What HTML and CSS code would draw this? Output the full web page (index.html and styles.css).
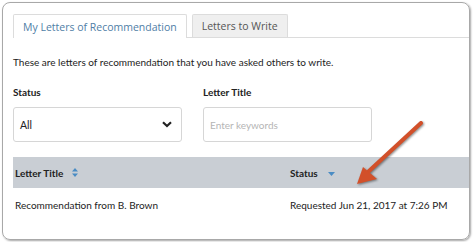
FILE: index.html
```html
<!DOCTYPE html>
<html lang="en">
<head>
    <meta charset="UTF-8">
    <title>Letters of Recommendation</title>
    <link rel="stylesheet" href="styles.css">
</head>
<body>
    <div class="card">
        <!-- Tabs -->
        <div class="tabs">
            <div class="tab active">My Letters of Recommendation</div>
            <div class="tab">Letters to Write</div>
        </div>

        <p class="intro">These are letters of recommendation that you have asked others to write.</p>

        <!-- Filters -->
        <div class="filters">
            <div class="field">
                <label>Status</label>
                <div class="select">
                    <span>All</span>
                    <svg class="chevron" width="10" height="7" viewBox="0 0 10 7">
                        <path d="M1 1.2 L5 5 L9 1.2" fill="none" stroke="#222" stroke-width="2.2"/>
                    </svg>
                </div>
            </div>
            <div class="field">
                <label>Letter Title</label>
                <div class="input">Enter keywords</div>
            </div>
        </div>

        <!-- Table -->
        <div class="table">
            <div class="row head">
                <div class="cell title">Letter Title
                    <svg class="sort" width="6" height="9" viewBox="0 0 6 9">
                        <path d="M3 0 L6 3.5 L0 3.5 Z M0 5.5 L6 5.5 L3 9 Z" fill="#4a8cc4"/>
                    </svg>
                </div>
                <div class="cell status">Status
                    <svg class="sort down" width="7" height="4" viewBox="0 0 7 4">
                        <path d="M0 0 L7 0 L3.5 4 Z" fill="#4a8cc4"/>
                    </svg>
                </div>
            </div>
            <div class="row">
                <div class="cell title">Recommendation from B. Brown</div>
                <div class="cell status">Requested Jun 21, 2017 at 7:26 PM</div>
            </div>
        </div>

        <!-- Callout arrow -->
        <svg class="arrow" width="80" height="80" viewBox="0 0 80 80">
            <line x1="66" y1="8" x2="14" y2="56" stroke="#d2502a" stroke-width="4" stroke-linecap="round"/>
            <polygon points="2,69 8,52 22,64" fill="#d2502a"/>
        </svg>
    </div>
</body>
</html>
```

FILE: styles.css
```css
body {
    margin: 0;
    font-family: 'Lato', sans-serif;
    color: #222;
    background-color: #fff;
}

.card {
    position: relative;
    margin: 2px;
    width: 468px;
    height: 238px;
    border: 1px solid #a8a8a8;
    border-radius: 8px;
    box-shadow: 1px 1px 2px rgba(0, 0, 0, 0.35);
    padding: 10px 0 0 10px;
    box-sizing: border-box;
    overflow: hidden;
}

.tabs {
    display: flex;
    align-items: flex-end;
    gap: 5px;
    height: 24px;
    border-bottom: 1px solid #dcdcdc;
}

.tab {
    height: 22px;
    padding: 0 9px;
    display: flex;
    align-items: center;
    font-family: 'Open Sans', sans-serif;
    font-size: 10.5px;
    color: #555;
    background-color: #efefef;
    border: 1px solid #dcdcdc;
    border-bottom: none;
    border-radius: 2px 2px 0 0;
}

.tab.active {
    height: 23px;
    margin-bottom: -1px;
    color: #4f7ea6;
    background-color: #fff;
}

.intro {
    margin: 0;
    padding-top: 17px;
    font-size: 10px;
    line-height: 14px;
}

.filters {
    display: flex;
    gap: 21px;
    margin-top: 16px;
}

.field label {
    display: block;
    font-size: 10px;
    font-weight: bold;
    line-height: 14px;
    margin-bottom: 8px;
}

.select,
.input {
    width: 169px;
    height: 35px;
    box-sizing: border-box;
    border: 1px solid #d6d6d6;
    border-radius: 3px;
    display: flex;
    align-items: center;
    justify-content: space-between;
    padding: 0 9px 0 6px;
    font-size: 10.5px;
}

.input {
    color: #b5b5b5;
    font-size: 10px;
}

.table {
    margin-top: 15px;
}

.row {
    display: flex;
    align-items: center;
    height: 33px;
    font-size: 10px;
}

.row.head {
    height: 31px;
    background-color: #c9ced4;
    font-weight: bold;
}

.cell.title {
    width: 275px;
    padding-left: 2px;
    display: flex;
    align-items: center;
}

.cell.status {
    display: flex;
    align-items: center;
}

.sort {
    margin-left: 9px;
}

.sort.down {
    margin-left: 10px;
    margin-top: 3px;
}

.arrow {
    position: absolute;
    left: 352px;
    top: 112px;
    filter: drop-shadow(1px 1px 1px rgba(0, 0, 0, 0.45));
}
```
